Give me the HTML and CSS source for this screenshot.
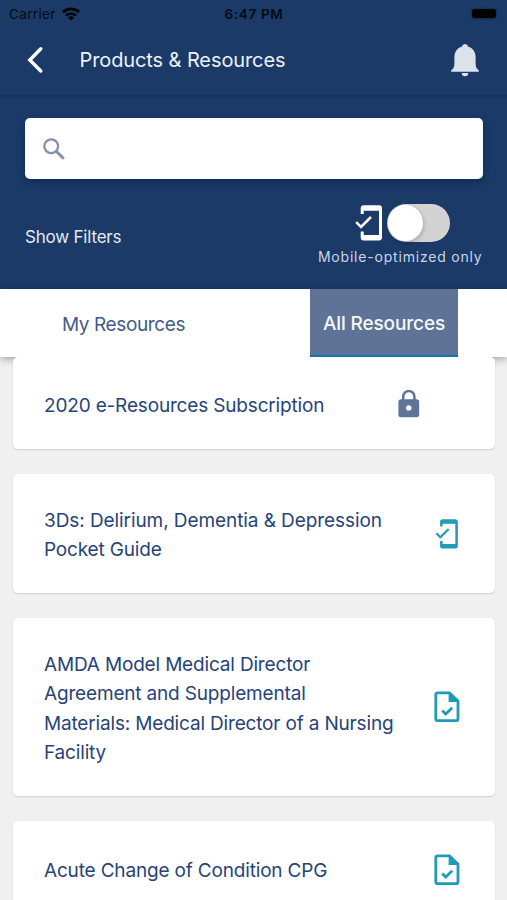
FILE: index.html
```html
<!DOCTYPE html>
<html lang="en">
<head>
<meta charset="utf-8">
<title>Products &amp; Resources</title>
<link rel="stylesheet" href="styles.css">
</head>
<body>
<svg width="0" height="0" class="defs">
  <symbol id="phone-check" viewBox="0 0 28 36">
    <path d="M7.2 9V3.2Q7.2 1.7 8.7 1.7H24Q25.5 1.7 25.5 3.2V32.5Q25.5 34 24 34H8.7Q7.2 34 7.2 32.5V26.5" fill="none" stroke="currentColor" stroke-width="3"/>
    <path d="M7.2 4.2H25M7.2 31.6H25" stroke="currentColor" stroke-width="3"/>
    <path d="M1.2 17.2L6 22L16 12" fill="none" stroke="currentColor" stroke-width="2.6"/>
  </symbol>
  <symbol id="file-check" viewBox="0 0 26 32">
    <path d="M3.8 1.8H15.5L24 10V27.7Q24 29.7 22 29.7H3.8Q1.8 29.7 1.8 27.7V3.8Q1.8 1.8 3.8 1.8Z" fill="none" stroke="currentColor" stroke-width="2.8"/>
    <path d="M14.6 2V11H24.5L16 2Z" fill="currentColor"/>
    <path d="M8.2 19.5L11.7 23L18.2 16.7" fill="none" stroke="currentColor" stroke-width="2.7"/>
  </symbol>
</svg>
<div class="status">
  <div class="carrier"><span>Carrier</span>
    <svg width="18" height="14" viewBox="0 0 18 14"><path d="M1 5.2A11.5 11.5 0 0 1 17 5.2" fill="none" stroke="#000" stroke-width="2.7"/><path d="M4 8.6A7.2 7.2 0 0 1 14 8.6" fill="none" stroke="#000" stroke-width="2.4"/><path d="M9 13.5L6 10.6A4.4 4.4 0 0 1 12 10.6Z"/></svg>
  </div>
  <div class="time">6:47 PM</div>
  <div class="battery"></div>
</div>
<header class="header">
  <svg class="back" width="18" height="28" viewBox="0 0 18 28"><path d="M14.8 2.8L3.8 14L14.8 25" fill="none" stroke="#fff" stroke-width="3.4" stroke-linecap="round" stroke-linejoin="miter"/></svg>
  <h1>Products &amp; Resources</h1>
  <svg class="bell" width="28" height="33" viewBox="0 0 28 33"><path d="M14 0A3 3 0 0 1 17 2.5C22 4 24.6 8 24.6 13V20C24.6 23.5 26 25 27.8 26.3V27.7H.2V26.3C2 25 3.4 23.5 3.4 20V13C3.4 8 6 4 11 2.5A3 3 0 0 1 14 0ZM10.8 29H17.2A3.2 3.2 0 0 1 10.8 29Z" fill="#dce2ec"/></svg>
</header>
<section class="filters">
  <div class="search">
    <svg width="22" height="22" viewBox="0 0 22 22"><circle cx="8.2" cy="8.2" r="6.9" fill="none" stroke="#8390b0" stroke-width="2.3"/><path d="M13.2 13.2L20.8 20.8" stroke="#8390b0" stroke-width="3"/></svg>
  </div>
  <div class="filter-row">
    <span class="show">Show Filters</span>
    <div class="mobile">
      <div class="toggle-row">
        <svg width="28" height="36"><use href="#phone-check"/></svg>
        <div class="toggle"><div class="knob"></div></div>
      </div>
      <span class="caption">Mobile-optimized only</span>
    </div>
  </div>
</section>
<nav class="tabs">
  <div class="tab-side"><span class="tab my">My Resources</span></div>
  <div class="tab-side right"><span class="tab active">All Resources</span></div>
</nav>
<main class="list">
  <article class="card locked">
    <p>2020 e-Resources Subscription</p>
    <svg class="lock" width="22" height="28" viewBox="0 0 22 28"><path d="M5.2 10V6.6A5.6 5.6 0 0 1 16.4 6.6V10" fill="none" stroke="#5f7398" stroke-width="2.5"/><path fill-rule="evenodd" d="M3 9.3H18.6Q21.2 9.3 21.2 12V24.5Q21.2 27.2 18.6 27.2H3Q.4 27.2 .4 24.5V12Q.4 9.3 3 9.3ZM10.8 15.2A2.7 2.7 0 1 0 10.8 20.6A2.7 2.7 0 1 0 10.8 15.2Z" fill="#5f7398"/></svg>
  </article>
  <article class="card">
    <p><span class="loose">3Ds: Delirium, Dementia &amp; Depression</span><br>Pocket Guide</p>
    <svg class="phone" width="24" height="30"><use href="#phone-check"/></svg>
  </article>
  <article class="card">
    <p>AMDA Model Medical Director<br>Agreement and Supplemental<br>Materials: Medical Director of a Nursing<br>Facility</p>
    <svg width="26" height="32"><use href="#file-check"/></svg>
  </article>
  <article class="card">
    <p>Acute Change of Condition CPG</p>
    <svg width="26" height="32"><use href="#file-check"/></svg>
  </article>
</main>
</body>
</html>
```
FILE: styles.css
```css
* { box-sizing: border-box; }
body { margin: 0; height: 900px; overflow: hidden; background: #f0f0f0; font-family: Inter, "Liberation Sans", sans-serif; color: #27437a; }
.defs { display: block; }
svg { display: block; flex: none; }
.status { height: 27px; background: #1b3a68; color: #030a16; display: grid; grid-template-columns: 1fr auto 1fr; align-items: center; padding: 0 11px 0 9px; font-size: 13.5px; }
.carrier { display: flex; align-items: center; gap: 6px; letter-spacing: .35px; }
.time { font-weight: 600; letter-spacing: .65px; padding-left: 3px; }
.battery { justify-self: end; width: 24px; height: 9px; border-radius: 3px; background: #000; box-shadow: 0 0 0 1.5px #15305a; }
.header { height: 68px; background: #1b3a68; display: flex; align-items: center; padding: 0 28px 2px 26px; }
h1 { margin: 0 auto 0 35.5px; font-weight: 400; font-size: 20px; color: #eef3fb; letter-spacing: -.1px; }
.filters { height: 194px; background: #1b3a68 linear-gradient(#15315d, #1b3a68) 0 0 / 100% 4px no-repeat; padding: 23px 24.5px 0 25px; }
.search { height: 61px; border-radius: 5px; background: #fff; padding: 19.5px 18px; box-shadow: 0 3px 7px #0c2448aa; }
.filter-row { display: flex; justify-content: space-between; margin-top: 24px; }
.show { margin-top: 24px; font-size: 17px; line-height: 21px; letter-spacing: -.2px; color: #e3eaf6; }
.mobile { display: flex; flex-direction: column; align-items: flex-end; }
.toggle-row { display: flex; align-items: center; gap: 4px; height: 40px; margin-right: 32.5px; color: #fff; }
.toggle { width: 63px; height: 38px; border-radius: 19px; background: #d3d3d3; padding: 1px; }
.knob { width: 35px; height: 36px; border-radius: 50%; background: #fff; box-shadow: 1px 2px 4px #0003; }
.caption { font-size: 14px; line-height: 18px; margin-top: 4.5px; letter-spacing: .8px; color: #cbd5e6; white-space: nowrap; }
.tabs { height: 68px; background: #fff; display: grid; grid-template-columns: 247px 1fr; box-shadow: 0 2px 8px #0005; font-size: 19px; }
.tab-side { display: flex; justify-content: center; }
.right { justify-content: flex-start; padding-left: 63px; }
.tab { display: flex; align-items: center; justify-content: center; white-space: nowrap; color: #425b89; letter-spacing: -.38px; padding-top: 2px; }
.active { width: 148px; background: #5f7396; color: #f5f8fc; border-bottom: 2px solid #0979b4; font-weight: 500; letter-spacing: -.12px; }
.list { padding: 0 12.5px 0 13px; display: flex; flex-direction: column; gap: 24.7px; position: relative; }
.card { background: #fff; border-radius: 5px; padding: 30.5px 34.5px 30.5px 31px; display: flex; align-items: center; justify-content: space-between; box-shadow: 0 1px 2px #0002; color: #1f9bb8; }
.card p { margin: 1.5px 0 -1.5px; font-size: 19px; line-height: 29.3px; letter-spacing: -.17px; color: #27437a; white-space: nowrap; }
.card .loose { letter-spacing: -.08px; }
.card .phone { margin-right: 1px; }
.card.locked { padding-right: 75px; padding-top: 32.4px; }
.card:last-child { padding-top: 32.7px; padding-bottom: 32px; }
.card:last-child p { line-height: 32px; }
```
